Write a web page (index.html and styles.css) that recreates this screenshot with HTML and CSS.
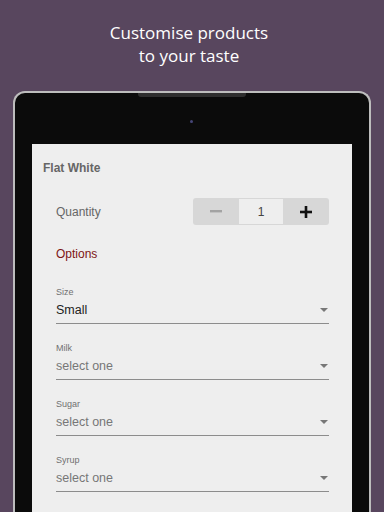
FILE: index.html
```html
<!DOCTYPE html>
<html>
<head>
<meta charset="utf-8">
<link rel="stylesheet" href="styles.css">
</head>
<body>
<h1 class="headline">Customise products<br>to your taste</h1>
<div class="device">
  <div class="notch"></div>
  <div class="camera"></div>
  <div class="screen">
    <div class="title">Flat White</div>
    <div class="qty-row">
      <span class="qty-label">Quantity</span>
      <div class="stepper">
        <div class="step-btn">
          <svg width="12" height="3" viewBox="0 0 12 3"><rect x="0" y="0" width="12" height="2.4" fill="#a3a3a3"/></svg>
        </div>
        <div class="step-value">1</div>
        <div class="step-btn">
          <svg width="12" height="12" viewBox="0 0 12 12"><rect x="4.7" y="0" width="2.6" height="12" fill="#111"/><rect x="0" y="4.7" width="12" height="2.6" fill="#111"/></svg>
        </div>
      </div>
    </div>
    <div class="options">Options</div>
    <div class="field">
      <div class="field-label">Size</div>
      <div class="field-value chosen"><span>Small</span><i class="caret"></i></div>
    </div>
    <div class="field">
      <div class="field-label">Milk</div>
      <div class="field-value"><span>select one</span><i class="caret"></i></div>
    </div>
    <div class="field">
      <div class="field-label">Sugar</div>
      <div class="field-value"><span>select one</span><i class="caret"></i></div>
    </div>
    <div class="field">
      <div class="field-label">Syrup</div>
      <div class="field-value"><span>select one</span><i class="caret"></i></div>
    </div>
  </div>
</div>
</body>
</html>
```
FILE: styles.css
```css
html, body {
  margin: 0;
  padding: 0;
}
body {
  background: #58465e;
  height: 512px;
  overflow: hidden;
}
.headline {
  margin: 0;
  padding: 21px 6px 0 0;
  font-family: "Open Sans", "Noto Sans", sans-serif;
  font-weight: 400;
  font-size: 17px;
  line-height: 23px;
  color: #ffffff;
  text-align: center;
}
.device {
  position: relative;
  box-sizing: border-box;
  margin: 24px 13px 0;
  height: 421px;
  padding: 51px 17px 0;
  background: #0b0b0b;
  border: 2px solid #bdbdbd;
  border-bottom: none;
  border-radius: 12px 12px 0 0;
}
.notch {
  position: absolute;
  top: 0;
  left: 123px;
  width: 108px;
  height: 4px;
  background: #2e2e2e;
  border-radius: 0 0 3px 3px;
}
.camera {
  position: absolute;
  top: 27px;
  left: 175px;
  width: 3px;
  height: 3px;
  border-radius: 50%;
  background: #464678;
}
.screen {
  background: #eeeeee;
  height: 368px;
  font-family: "Liberation Sans", Arial, sans-serif;
  padding: 16px 23px 0 24px;
  box-sizing: border-box;
}
.title {
  margin-left: -13px;
  font-size: 12px;
  font-weight: 700;
  line-height: 16px;
  color: #666666;
}
.qty-row {
  margin-top: 22px;
  display: flex;
  justify-content: space-between;
  align-items: center;
}
.qty-label {
  font-size: 12px;
  color: #666666;
}
.stepper {
  display: flex;
  width: 136px;
  height: 27px;
  box-sizing: border-box;
  padding: 1px 0;
  background: #d7d7d7;
  border-radius: 3px;
}
.step-btn {
  flex: 1;
  display: flex;
  align-items: center;
  justify-content: center;
}
.step-value {
  width: 44px;
  background: #eeeeee;
  display: flex;
  align-items: center;
  justify-content: center;
  font-size: 12px;
  color: #444444;
}
.options {
  margin-top: 21px;
  font-size: 12px;
  line-height: 16px;
  color: #7d1515;
}
.field {
  margin-top: 24px;
}
.field + .field {
  margin-top: 18px;
}
.field-label {
  font-size: 9px;
  line-height: 12px;
  color: #707070;
}
.field-value {
  margin-top: 3px;
  height: 18px;
  padding-bottom: 4px;
  border-bottom: 1px solid #8c8c8c;
  display: flex;
  justify-content: space-between;
  align-items: center;
  font-size: 12.5px;
  color: #777777;
}
.field-value.chosen {
  color: #222222;
}
.caret {
  width: 0;
  height: 0;
  margin-right: 1px;
  border-left: 4px solid transparent;
  border-right: 4px solid transparent;
  border-top: 4px solid #777777;
}
```
